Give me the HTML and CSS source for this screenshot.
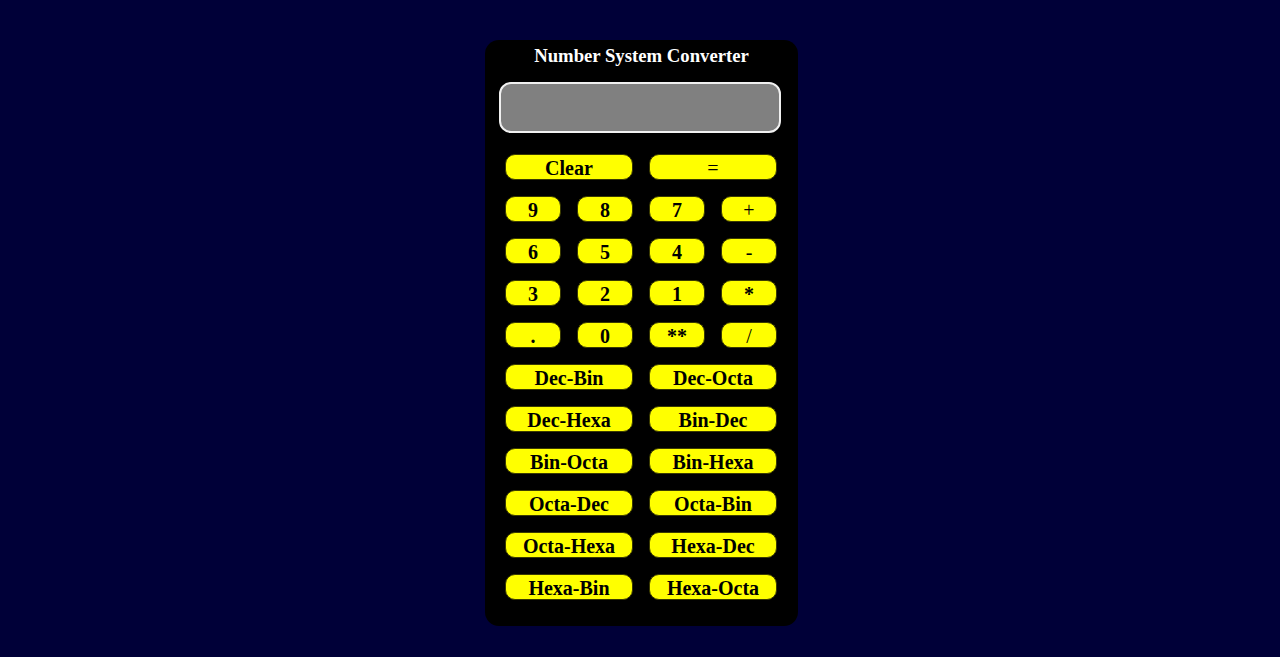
FILE: index.html
```html
<!DOCTYPE html>
<html>
<head>
<meta charset="utf-8">
<link rel="stylesheet" href="styles.css">
</head>
<body>
<div class="calc">
  <h3 class="title">Number System Converter</h3>
  <div class="display"></div>
  <div class="keys">
    <button class="key wide">Clear</button>
    <button class="key wide op">=</button>
    <button class="key">9</button>
    <button class="key">8</button>
    <button class="key">7</button>
    <button class="key op">+</button>
    <button class="key">6</button>
    <button class="key">5</button>
    <button class="key">4</button>
    <button class="key op">-</button>
    <button class="key">3</button>
    <button class="key">2</button>
    <button class="key">1</button>
    <button class="key">*</button>
    <button class="key">.</button>
    <button class="key">0</button>
    <button class="key">**</button>
    <button class="key op">/</button>
    <button class="key wide">Dec-Bin</button>
    <button class="key wide">Dec-Octa</button>
    <button class="key wide">Dec-Hexa</button>
    <button class="key wide">Bin-Dec</button>
    <button class="key wide">Bin-Octa</button>
    <button class="key wide">Bin-Hexa</button>
    <button class="key wide">Octa-Dec</button>
    <button class="key wide">Octa-Bin</button>
    <button class="key wide">Octa-Hexa</button>
    <button class="key wide">Hexa-Dec</button>
    <button class="key wide">Hexa-Bin</button>
    <button class="key wide">Hexa-Octa</button>
  </div>
</div>
</body>
</html>
```

FILE: styles.css
```css
html, body {
  margin: 0;
  padding: 0;
}
body {
  background: #000038;
  font-family: "Liberation Serif", "Times New Roman", serif;
  height: 657px;
  overflow: hidden;
}
.calc {
  box-sizing: border-box;
  width: 313px;
  height: 586px;
  margin: 40px 0 0 485px;
  background: #000;
  border-radius: 14px;
  padding-top: 5px;
  display: flex;
  flex-direction: column;
  align-items: flex-start;
}
.title {
  align-self: center;
  margin: 0;
  color: #fff;
  font-size: 18.72px;
  font-weight: bold;
  line-height: 22px;
  text-align: center;
}
.display {
  box-sizing: border-box;
  width: 282px;
  height: 51px;
  margin-top: 15px;
  margin-left: 14px;
  background: #808080;
  border: 2px solid #f0f0f0;
  border-radius: 12px;
}
.keys {
  margin-top: 21px;
  margin-left: 20px;
  display: grid;
  grid-template-columns: repeat(4, 56px);
  grid-auto-rows: 26px;
  column-gap: 16px;
  row-gap: 16px;
}
.key {
  box-sizing: border-box;
  margin: 0;
  padding: 2px 0 0;
  background: #ffff00;
  border: 1px solid #3a3a00;
  border-radius: 10px;
  font-family: "Liberation Serif", "Times New Roman", serif;
  font-weight: bold;
  font-size: 20px;
  line-height: 22px;
  color: #000;
  text-align: center;
}
.op {
  font-weight: normal;
}
.wide {
  grid-column: span 2;
}
```
